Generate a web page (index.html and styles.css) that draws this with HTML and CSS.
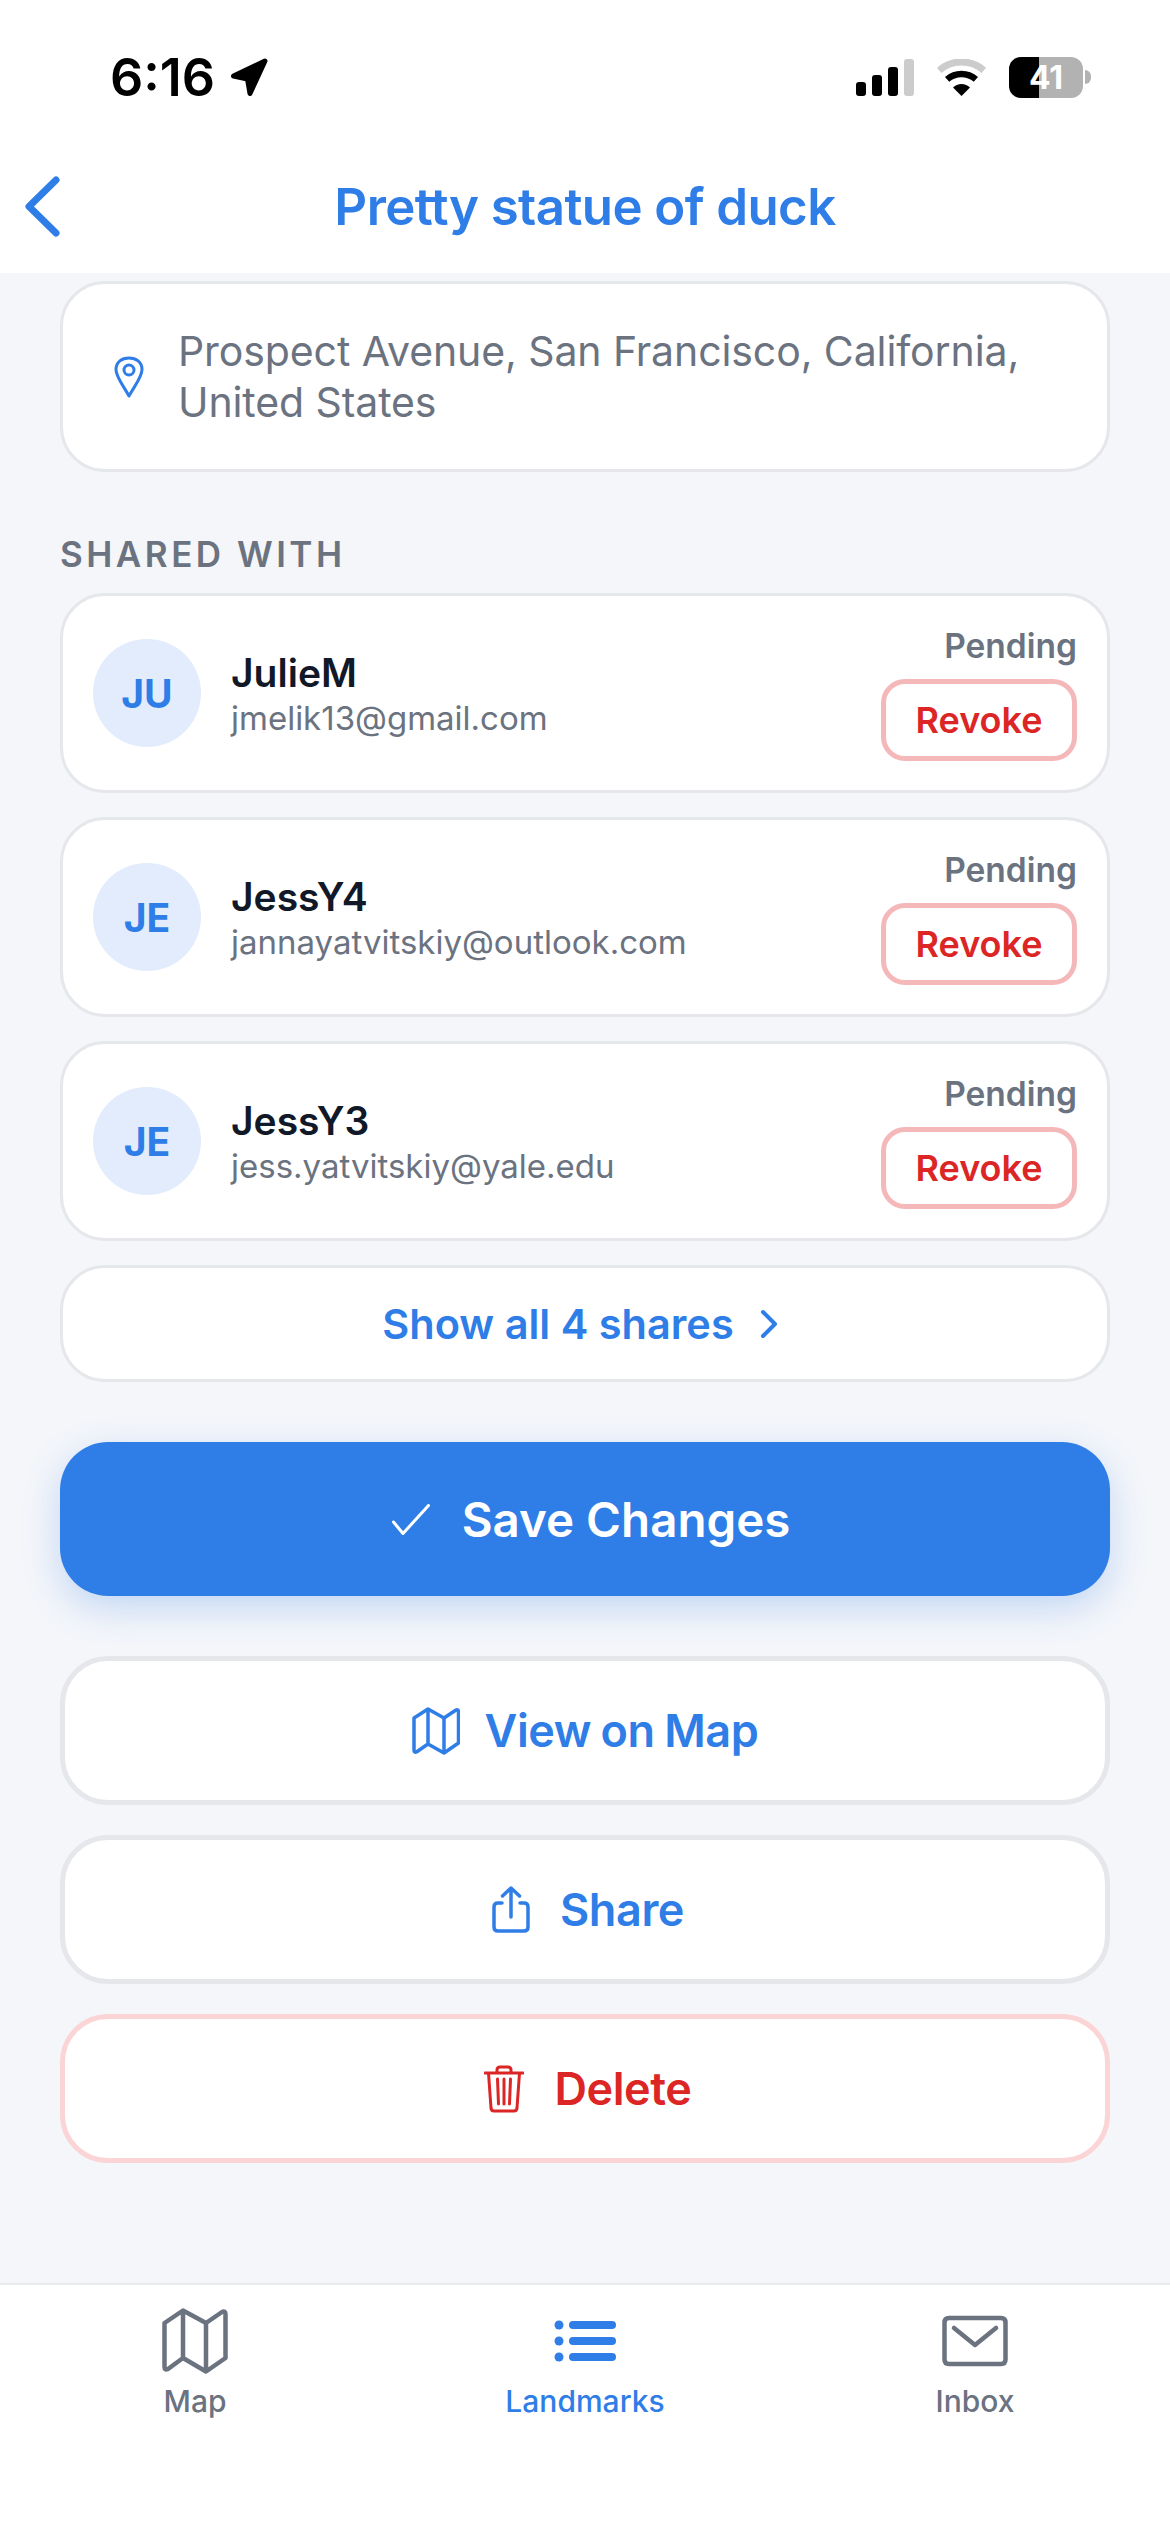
FILE: index.html
```html
<!DOCTYPE html>
<html>
<head>
    <title>Pretty statue of duck</title>
    <link rel="stylesheet" href="styles.css">
</head>
<body>

<header class="top">
    <div class="status">
        <div class="status-left">
            <span class="clock">6:16</span>
            <svg class="arrow" viewBox="0 0 39 39"><path d="M3.500 18 L35 3 L20 35.500 L17.500 21 Z" fill="#000" stroke="#000" stroke-width="5" stroke-linejoin="round"/></svg>
        </div>
        <div class="status-right">
            <div class="signal">
                <span class="bar bar1"></span>
                <span class="bar bar2"></span>
                <span class="bar bar3"></span>
                <span class="bar bar4"></span>
            </div>
            <svg class="wifi" viewBox="0 0 51 37">
                <path d="M3.200 11.300 A34 34 0 0 1 47.800 11.300" fill="none" stroke="#ccc" stroke-width="7"/>
                <path d="M11.100 20.400 A22 22 0 0 1 39.900 20.400" fill="none" stroke="#000" stroke-width="6.500"/>
                <path d="M25.500 37 L17 28.500 A12 12 0 0 1 34 28.500 Z" fill="#000"/>
            </svg>
            <div class="battery"><span class="battery-num">41</span></div>
            <span class="battery-cap"></span>
        </div>
    </div>
    <div class="nav">
        <svg class="back" viewBox="0 0 35 61"><path d="M31 4 L4 30.500 L31 57" fill="none" stroke="#2f7de7" stroke-width="7" stroke-linecap="round" stroke-linejoin="round"/></svg>
        <h1 class="title">Pretty statue of duck</h1>
    </div>
</header>

<main class="content">
    <div class="card location">
        <svg class="pin" viewBox="0 0 30 42"><path d="M15 40 C9 29 2 21 2 13.500 C2 6 8 2 15 2 C22 2 28 6 28 13.500 C28 21 21 29 15 40 Z" fill="none" stroke="#2f7de7" stroke-width="3" stroke-linejoin="round"/><circle cx="15" cy="14" r="5" fill="none" stroke="#2f7de7" stroke-width="3"/></svg>
        <p class="address">Prospect Avenue, San Francisco, California, United States</p>
    </div>

    <h2 class="section-label">SHARED WITH</h2>

    <div class="shares">
        <div class="card share">
            <div class="avatar">JU</div>
            <div class="who">
                <div class="name">JulieM</div>
                <div class="email">jmelik13@gmail.com</div>
            </div>
            <div class="state">
                <div class="pending">Pending</div>
                <div class="revoke">Revoke</div>
            </div>
        </div>
        <div class="card share">
            <div class="avatar">JE</div>
            <div class="who">
                <div class="name">JessY4</div>
                <div class="email">jannayatvitskiy@outlook.com</div>
            </div>
            <div class="state">
                <div class="pending">Pending</div>
                <div class="revoke">Revoke</div>
            </div>
        </div>
        <div class="card share">
            <div class="avatar">JE</div>
            <div class="who">
                <div class="name">JessY3</div>
                <div class="email">jess.yatvitskiy@yale.edu</div>
            </div>
            <div class="state">
                <div class="pending">Pending</div>
                <div class="revoke">Revoke</div>
            </div>
        </div>
        <div class="card show-all">
            <span>Show all 4 shares</span>
            <svg class="chev" viewBox="0 0 18 30"><path d="M3 3 L15 15 L3 27" fill="none" stroke="#2f7de7" stroke-width="4" stroke-linecap="round" stroke-linejoin="round"/></svg>
        </div>
    </div>

    <div class="save">
        <svg class="check" viewBox="0 0 38 31"><path d="M1.500 18 L11 29.500 L36.500 1.500" fill="none" stroke="#fff" stroke-width="3" stroke-linecap="round" stroke-linejoin="round"/></svg>
        <span>Save Changes</span>
    </div>

    <div class="actions">
        <div class="action">
            <svg class="icon-map" viewBox="0 0 48 48"><path d="M2 11 L16 2 L32 11 L44 3 Q46.500 2 46.500 5 L46.500 36 L32 46 L16 37 L4.500 45 Q2 46 2 43 Z M16 2 L16 37 M32 11 L32 46" fill="none" stroke="#2f7de7" stroke-width="3.500" stroke-linejoin="round"/></svg>
            <span>View on Map</span>
        </div>
        <div class="action">
            <svg class="icon-share" viewBox="0 0 38 47"><path d="M10 17 L6 17 Q2 17 2 21 L2 41 Q2 45 6 45 L32 45 Q36 45 36 41 L36 21 Q36 17 32 17 L28 17 M19 31 L19 2 M10.500 10 L19 2 L27.500 10" fill="none" stroke="#2f7de7" stroke-width="3.500" stroke-linecap="round" stroke-linejoin="round"/></svg>
            <span>Share</span>
        </div>
        <div class="action danger">
            <svg class="icon-trash" viewBox="0 0 40 48"><path d="M1 8 L39 8 M13 8 L13 5 Q13 2 16 2 L24 2 Q27 2 27 5 L27 8 M4.500 8 L7 43 Q7.300 46 10 46 L30 46 Q32.700 46 33 43 L35.500 8 M13.500 14 L14.500 39 M20 14 L20 39 M26.500 14 L25.500 39" fill="none" stroke="#dc2626" stroke-width="3" stroke-linecap="round" stroke-linejoin="round"/></svg>
            <span>Delete</span>
        </div>
    </div>
</main>

<nav class="tabs">
    <div class="tab">
        <svg class="tab-icon" viewBox="0 0 66 66"><path d="M2.500 15 L21 2.500 L44 15 L60 4 Q63.500 2.500 63.500 6 L63.500 50 L44 63.500 L21 50 L6 61 Q2.500 62.500 2.500 59 Z M21 2.500 L21 50 M44 15 L44 63.500" fill="none" stroke="#6b7280" stroke-width="4.500" stroke-linejoin="round"/></svg>
        <span class="tab-label">Map</span>
    </div>
    <div class="tab active">
        <svg class="tab-icon" viewBox="0 0 66 66"><circle cx="7" cy="17" r="4.500" fill="#2f7de7"/><circle cx="7" cy="33" r="4.500" fill="#2f7de7"/><circle cx="7" cy="49" r="4.500" fill="#2f7de7"/><rect x="17" y="13" width="47" height="8" rx="4" fill="#2f7de7"/><rect x="17" y="29" width="47" height="8" rx="4" fill="#2f7de7"/><rect x="17" y="45" width="47" height="8" rx="4" fill="#2f7de7"/></svg>
        <span class="tab-label">Landmarks</span>
    </div>
    <div class="tab">
        <svg class="tab-icon" viewBox="0 0 66 66"><path d="M7 10 L59 10 Q63.500 10 63.500 14.500 L63.500 51.500 Q63.500 56 59 56 L7 56 Q2.500 56 2.500 51.500 L2.500 14.500 Q2.500 10 7 10 Z M12 20 L33 37 L54 20" fill="none" stroke="#6b7280" stroke-width="4.500" stroke-linecap="round" stroke-linejoin="round"/></svg>
        <span class="tab-label">Inbox</span>
    </div>
</nav>

</body>
</html>
```
FILE: styles.css
```css
* {
    box-sizing : border-box;
}
BODY {
    margin : 0;
    width : 1170px;
    height : 2532px;
    display : flex;
    flex-direction : column;
    overflow : hidden;
    background-color : #f4f6fa;
    font-family : Inter, "Liberation Sans", sans-serif;
    color : #6b7280;
}

/* status bar and title */
.top {
    height : 273px;
    background-color : #fff;
    flex-shrink : 0;
}
.status {
    height : 150px;
    padding : 57px 79px 0 110px;
    display : flex;
    justify-content : space-between;
}
.status-left {
    display : flex;
    align-items : flex-start;
    gap : 15px;
}
.clock {
    font-size : 52px;
    font-weight : 600;
    line-height : 41px;
    color : #000;
}
.arrow {
    width : 39px;
    height : 39px;
    margin-top : 1px;
}
.status-right {
    display : flex;
    align-items : flex-start;
}
.signal {
    display : flex;
    align-items : flex-end;
    gap : 6px;
    height : 37px;
    margin : 2px 22px 0 0;
}
.bar {
    width : 10px;
    border-radius : 3px;
    background-color : #000;
}
.bar1 { height : 14px; }
.bar2 { height : 21px; }
.bar3 { height : 29px; }
.bar4 { height : 37px; background-color : #ccc; }
.wifi {
    width : 51px;
    height : 37px;
    margin : 2px 22px 0 0;
}
.battery {
    width : 74px;
    height : 41px;
    border-radius : 12px;
    background : linear-gradient(90deg, #000 41%, #b2b2b2 41%);
    display : flex;
    align-items : center;
    justify-content : center;
}
.battery-num {
    font-size : 32px;
    font-weight : 700;
    color : #fff;
    line-height : 41px;
}
.battery-cap {
    width : 6px;
    height : 14px;
    margin : 13px 0 0 2px;
    border-radius : 0 7px 7px 0;
    background-color : #b2b2b2;
}
.nav {
    position : relative;
    height : 112px;
    display : flex;
    align-items : center;
    justify-content : center;
}
.back {
    position : absolute;
    left : 25px;
    top : 26px;
    width : 35px;
    height : 61px;
}
.title {
    margin : 0;
    font-size : 51px;
    font-weight : 600;
    letter-spacing : -0.6px;
    color : #2f7de7;
}

/* scrolling part */
.content {
    flex : 1;
    padding : 8px 60px 0 60px;
}
.card {
    background-color : #fff;
    border : 3px solid #e5e7eb;
    border-radius : 45px;
}
.location {
    height : 191px;
    padding : 0 30px 0 51px;
    display : flex;
    align-items : center;
    gap : 34px;
}
.pin {
    width : 30px;
    height : 42px;
    flex-shrink : 0;
}
.address {
    margin : 0;
    font-size : 41px;
    letter-spacing : -0.1px;
    line-height : 51px;
}
.section-label {
    margin : 0;
    padding-top : 62px;
    height : 121px;
    font-size : 35px;
    font-weight : 600;
    letter-spacing : 3.500px;
    line-height : 40px;
}
.shares {
    display : flex;
    flex-direction : column;
    gap : 24px;
}
.share {
    height : 200px;
    padding : 0 30px;
    display : flex;
    align-items : center;
}
.avatar {
    width : 108px;
    height : 108px;
    border-radius : 50%;
    background-color : #e2ecfc;
    color : #2f7de7;
    font-size : 39px;
    font-weight : 700;
    display : flex;
    align-items : center;
    justify-content : center;
    flex-shrink : 0;
}
.who {
    flex : 1;
    margin-left : 30px;
}
.name {
    margin-top : 2px;
    font-size : 39px;
    font-weight : 600;
    line-height : 46px;
    color : #111827;
}
.email {
    margin-top : 2px;
    font-size : 33px;
    line-height : 40px;
}
.state {
    display : flex;
    flex-direction : column;
    align-items : flex-end;
    gap : 13px;
}
.pending {
    margin-top : 1px;
    font-size : 33.5px;
    font-weight : 600;
    line-height : 40px;
}
.revoke {
    width : 196px;
    height : 82px;
    border : 5px solid #f4b8b8;
    border-radius : 24px;
    color : #dc2626;
    font-size : 36px;
    font-weight : 600;
    display : flex;
    align-items : center;
    justify-content : center;
}
.show-all {
    height : 117px;
    padding-right : 10px;
    display : flex;
    align-items : center;
    justify-content : center;
    gap : 26px;
    font-size : 41.5px;
    font-weight : 600;
    color : #2f7de7;
}
.chev {
    width : 18px;
    height : 30px;
}
.save {
    margin-top : 60px;
    height : 154px;
    padding-left : 12px;
    border-radius : 48px;
    background-color : #2f7de7;
    box-shadow : 0 12px 36px rgba(47, 125, 231, 0.25);
    display : flex;
    align-items : center;
    justify-content : center;
    gap : 32px;
    font-size : 47.5px;
    font-weight : 600;
    color : #fff;
}
.check {
    width : 38px;
    height : 31px;
}
.actions {
    margin-top : 60px;
    display : flex;
    flex-direction : column;
    gap : 30px;
}
.action {
    height : 149px;
    padding-left : 6px;
    background-color : #fff;
    border : 5px solid #e5e7eb;
    border-radius : 48px;
    display : flex;
    align-items : center;
    justify-content : center;
    gap : 30px;
    font-size : 45px;
    font-weight : 600;
    letter-spacing : -0.4px;
    word-spacing : -1.5px;
    color : #2f7de7;
}
.danger {
    border-color : #fbd5d5;
    color : #dc2626;
}
.icon-map {
    width : 48px;
    height : 48px;
    margin : 0 -5px 0 -6px;
}
.icon-share {
    width : 38px;
    height : 47px;
}
.icon-trash {
    width : 40px;
    height : 48px;
}

/* tab bar */
.tabs {
    height : 249px;
    flex-shrink : 0;
    background-color : #fff;
    border-top : 2px solid #e9ebef;
    display : grid;
    grid-template-columns : 1fr 1fr 1fr;
}
.tab {
    padding-top : 23px;
    display : flex;
    flex-direction : column;
    align-items : center;
}
.tab-icon {
    width : 66px;
    height : 66px;
}
.tab-label {
    margin-top : 9px;
    font-size : 30px;
    font-weight : 500;
    line-height : 36px;
}
.active .tab-label {
    color : #2f7de7;
}
```
